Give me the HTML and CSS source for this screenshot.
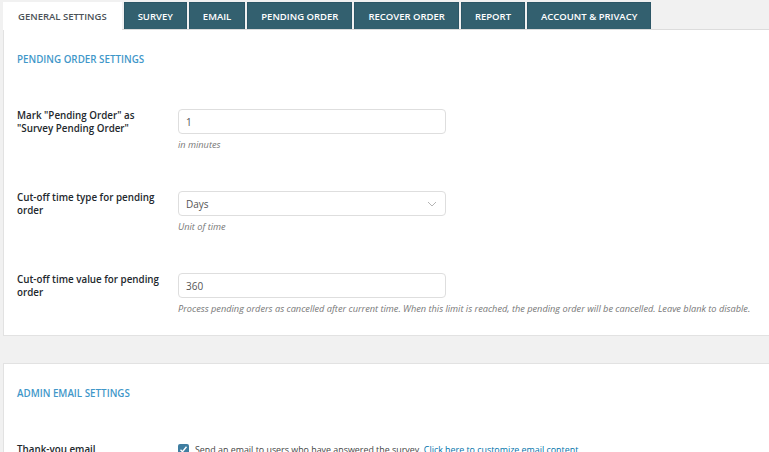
FILE: index.html
```html
<!DOCTYPE html>
<html lang="en">
<head>
    <meta charset="UTF-8">
    <meta name="viewport" content="width=device-width, initial-scale=1.0">
    <title>General Settings</title>
    <link rel="stylesheet" href="styles.css">
</head>
<body>
    <div class="wrap">
        <nav class="tabs">
            <a class="tab active">General Settings</a>
            <a class="tab">Survey</a>
            <a class="tab">Email</a>
            <a class="tab">Pending Order</a>
            <a class="tab">Recover Order</a>
            <a class="tab">Report</a>
            <a class="tab">Account &amp; Privacy</a>
        </nav>

        <div class="panel first">
            <h3 class="section-title">Pending Order Settings</h3>

            <div class="row">
                <label class="row-label">Mark "Pending Order" as "Survey Pending Order"</label>
                <div class="row-field">
                    <input type="text" class="text-input" value="1">
                    <p class="description">in minutes</p>
                </div>
            </div>

            <div class="row">
                <label class="row-label">Cut-off time type for pending order</label>
                <div class="row-field">
                    <div class="select">
                        <span>Days</span>
                        <svg width="10" height="6" viewBox="0 0 10 6"><path d="M1 1l4 4 4-4" fill="none" stroke="#b5b5b5" stroke-width="1"/></svg>
                    </div>
                    <p class="description">Unit of time</p>
                </div>
            </div>

            <div class="row">
                <label class="row-label">Cut-off time value for pending order</label>
                <div class="row-field">
                    <input type="text" class="text-input" value="360">
                    <p class="description">Process pending orders as cancelled after current time. When this limit is reached, the pending order will be cancelled. Leave blank to disable.</p>
                </div>
            </div>
        </div>

        <div class="panel">
            <h3 class="section-title">Admin Email Settings</h3>

            <div class="row">
                <label class="row-label">Thank-you email</label>
                <div class="row-field check-field">
                    <span class="checkbox">
                        <svg width="9" height="9" viewBox="0 0 9 9"><path d="M1.5 4.8l2 2 4-5" fill="none" stroke="#fff" stroke-width="1.4"/></svg>
                    </span>
                    <span>Send an email to users who have answered the survey. <a class="link">Click here to customize email content</a></span>
                </div>
            </div>
        </div>
    </div>
</body>
</html>
```

FILE: styles.css
```css
* {
    margin: 0;
    padding: 0;
    box-sizing: border-box;
    font-family: 'Open Sans', 'Liberation Sans', sans-serif;
}

body {
    background-color: #f1f1f1;
    overflow: hidden;
    color: #23282d;
}

.wrap {
    padding: 2px 0 0 3px;
    margin-right: -20px;
}

.tabs {
    display: flex;
    gap: 2px;
    border-bottom: 1px solid #dcdcdc;
}

.tab {
    height: 27px;
    line-height: 27px;
    padding: 0 13px;
    background-color: #33606f;
    color: #fff;
    font-size: 9.5px;
    font-weight: 600;
    text-transform: uppercase;
    border: 1px solid #2c5666;
    border-bottom: none;
}

.tab.active {
    background-color: #fff;
    color: #4c5358;
    border-color: #fff;
    padding: 0 14px;
    margin-bottom: -1px;
    height: 28px;
}

.panel {
    background-color: #fff;
    border: 1px solid #e2e2e2;
    border-top: none;
    padding: 22px 13px 20px;
}

.panel + .panel {
    margin-top: 27px;
    border-top: 1px solid #e2e2e2;
}

.section-title {
    font-size: 9.8px;
    font-weight: 600;
    line-height: 16px;
    color: #3f97c9;
    text-transform: uppercase;
}

.row {
    display: flex;
    margin-top: 40px;
}

.section-title + .row {
    margin-top: 41px;
}

.row-label {
    width: 161px;
    flex-shrink: 0;
    padding: 0 14px 0 0;
    font-size: 9.8px;
    font-weight: 600;
    line-height: 13px;
    color: #23282d;
}

.row-field {
    flex: 1;
}

.text-input, .select {
    display: flex;
    align-items: center;
    justify-content: space-between;
    width: 268px;
    height: 25px;
    padding: 0 8px 0 7px;
    border: 1px solid #dedede;
    border-radius: 4px;
    font-size: 10px;
    color: #555;
    background-color: #fff;
    outline: none;
}

.description {
    margin-top: 4px;
    font-size: 9.2px;
    line-height: 13px;
    font-style: italic;
    color: #777;
    white-space: nowrap;
}

.check-field {
    display: flex;
    align-items: center;
    gap: 6px;
    font-size: 8.9px;
    color: #444;
    white-space: nowrap;
}

.checkbox {
    display: flex;
    align-items: center;
    justify-content: center;
    width: 11px;
    height: 11px;
    border-radius: 2px;
    background-color: #3f7ea1;
}

.link {
    color: #0073aa;
}
```
